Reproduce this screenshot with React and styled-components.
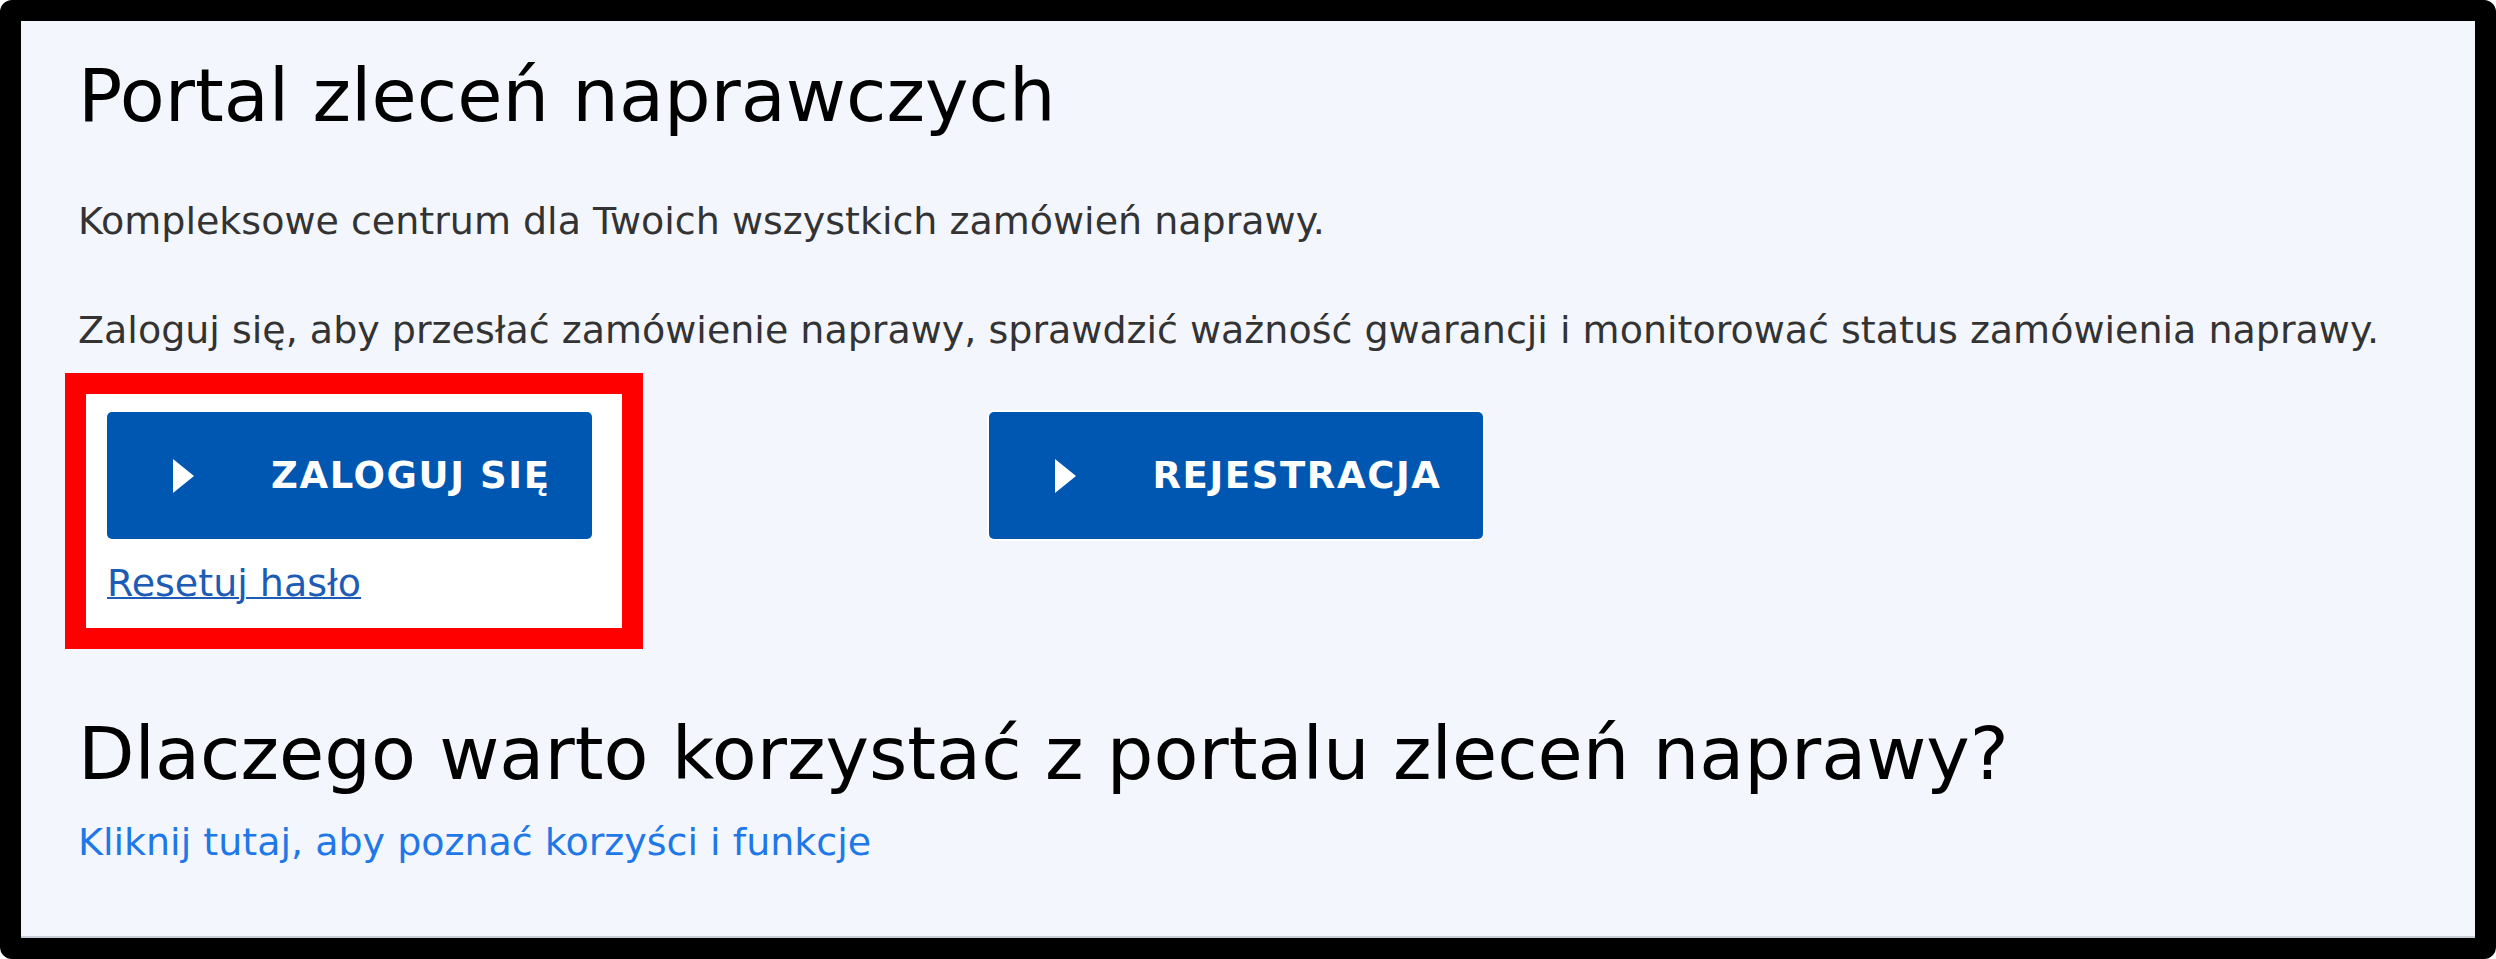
import React from "react";
import styled, { createGlobalStyle } from "styled-components";

const GlobalStyle = createGlobalStyle`
  html, body {
    margin: 0;
    padding: 0;
    background: #ffffff;
  }
  * {
    box-sizing: border-box;
  }
`;

const Frame = styled.div`
  width: 2496px;
  height: 959px;
  border: 21px solid #000;
  border-radius: 12px;
  background: #f3f7fd;
  box-shadow: inset 0 -2px 0 #c9ced6;
  padding: 31px 57px 0;
  font-family: "DejaVu Sans", "Liberation Sans", sans-serif;
  overflow: hidden;
`;

const Title = styled.h1`
  margin: 0 0 ${(props) => props.gap || 0}px;
  margin-top: ${(props) => props.top || 0}px;
  font-size: 73.5px;
  line-height: 88px;
  font-weight: normal;
  color: #000;
`;

const Text = styled.p`
  margin: 0 0 ${(props) => props.gap || 0}px;
  font-size: 38px;
  line-height: 57px;
  color: #333;
`;

const Actions = styled.div`
  display: flex;
  align-items: flex-start;
  margin-left: -13px;
`;

const Highlight = styled.div`
  display: flex;
  flex-direction: column;
  align-items: flex-start;
  gap: 16px;
  border: 21px solid #ff0000;
  background: #fff;
  padding: 18px 30px 16px 21px;
`;

const Column = styled.div`
  margin-left: 346px;
  margin-top: 39px;
`;

const Button = styled.button`
  display: flex;
  align-items: center;
  gap: 77px;
  height: 127px;
  padding: 0 41px 0 66px;
  border: none;
  border-radius: 5px;
  background: #0057b1;
  box-shadow: 0 0 0 2px #fff;
  color: #fff;
  font-family: "DejaVu Sans", "Liberation Sans", sans-serif;
  font-weight: bold;
  font-size: 37px;
  letter-spacing: 1.6px;
  text-transform: uppercase;
  cursor: pointer;

  svg {
    flex: none;
  }
`;

const Link = styled.a`
  font-size: 38px;
  line-height: 57px;
  color: ${(props) => (props.muted ? "#1c5cb5" : "#1f78e8")};
  text-decoration: ${(props) => (props.muted ? "underline" : "none")};
  text-decoration-thickness: 2px;
  cursor: pointer;
`;

const PlayIcon = () => (
  <svg width="21" height="34" viewBox="0 0 21 34">
    <polygon points="0,0 21,17 0,34" fill="#fff" />
  </svg>
);

const App = () => {
  return (
    <>
      <GlobalStyle />
      <Frame>
        <Title gap={53}>Portal zleceń naprawczych</Title>
        <Text gap={52}>
          Kompleksowe centrum dla Twoich wszystkich zamówień naprawy.
        </Text>
        <Text gap={14}>
          Zaloguj się, aby przesłać zamówienie naprawy, sprawdzić ważność
          gwarancji i monitorować status zamówienia naprawy.
        </Text>
        <Actions>
          <Highlight>
            <Button>
              <PlayIcon />
              Zaloguj się
            </Button>
            <Link muted>Resetuj hasło</Link>
          </Highlight>
          <Column>
            <Button>
              <PlayIcon />
              Rejestracja
            </Button>
          </Column>
        </Actions>
        <Title top={61} gap={16}>
          Dlaczego warto korzystać z portalu zleceń naprawy?
        </Title>
        <Link>Kliknij tutaj, aby poznać korzyści i funkcje</Link>
      </Frame>
    </>
  );
};

export default App;
